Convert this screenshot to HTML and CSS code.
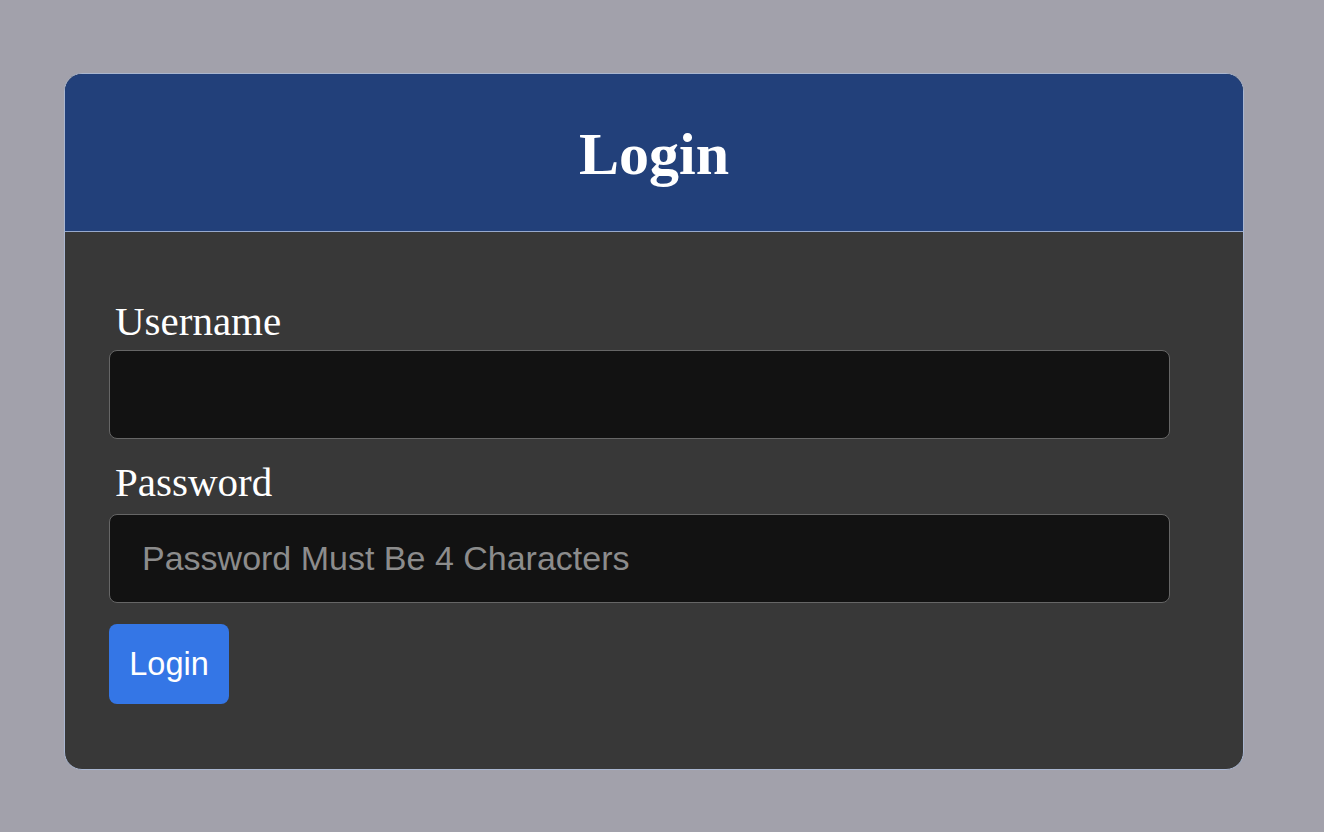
FILE: index.html
```html
<!DOCTYPE html>
<html lang="en">
<head>
<meta charset="utf-8">
<title>Login</title>
<link rel="stylesheet" href="styles.css">
</head>
<body>
  <main class="page">
    <section class="card">
      <header class="card-header">
        <h2 class="title">Login</h2>
      </header>
      <form class="card-body">
        <label class="label" for="username">Username</label>
        <input class="field" id="username" type="text">
        <label class="label label-second" for="password">Password</label>
        <input class="field field-second" id="password" type="password" placeholder="Password Must Be 4 Characters">
        <button class="btn" type="button">Login</button>
      </form>
    </section>
  </main>
</body>
</html>
```

FILE: styles.css
```css
html, body {
  margin: 0;
  padding: 0;
}

body {
  background: #a2a1ab;
  font-family: "Liberation Serif", "Times New Roman", serif;
  width: 1324px;
  height: 832px;
  overflow: hidden;
}

.page {
  padding: 73px 80px 0 64px;
}

.card {
  width: 1178px;
  border: 1px solid #a9b6d0;
  border-radius: 18px;
  overflow: hidden;
  background: #383838;
}

.card-header {
  height: 157px;
  background: #22407a;
  border-bottom: 1px solid #97a9cc;
  display: flex;
  align-items: center;
  justify-content: center;
}

.title {
  margin: 0;
  color: #ffffff;
  font-family: "Liberation Serif", "Times New Roman", serif;
  font-weight: bold;
  font-size: 60px;
  line-height: 66px;
  padding-top: 2px;
}

.card-body {
  display: flex;
  flex-direction: column;
  align-items: flex-start;
  padding: 66px 0 65px 44px;
}

.label {
  display: block;
  color: #ffffff;
  font-size: 41px;
  line-height: 46px;
  padding-left: 6px;
  margin-bottom: 6px;
}

.label-second {
  margin-top: 20px;
  margin-bottom: 9px;
}

.field {
  box-sizing: border-box;
  width: 1061px;
  height: 89px;
  margin: 0;
  background: #121212;
  border: 1px solid #666666;
  border-radius: 8px;
  padding: 0 32px;
  color: #e6e6e6;
  font-family: "Liberation Sans", Arial, sans-serif;
  font-size: 34px;
  outline: none;
}

.field::placeholder {
  color: #8c8c8c;
  opacity: 1;
}

.btn {
  margin-top: 21px;
  box-sizing: border-box;
  width: 120px;
  height: 80px;
  padding: 0;
  border: none;
  border-radius: 8px;
  background: #3476e6;
  color: #ffffff;
  font-family: "Liberation Sans", Arial, sans-serif;
  font-size: 32.5px;
  cursor: pointer;
}
```
